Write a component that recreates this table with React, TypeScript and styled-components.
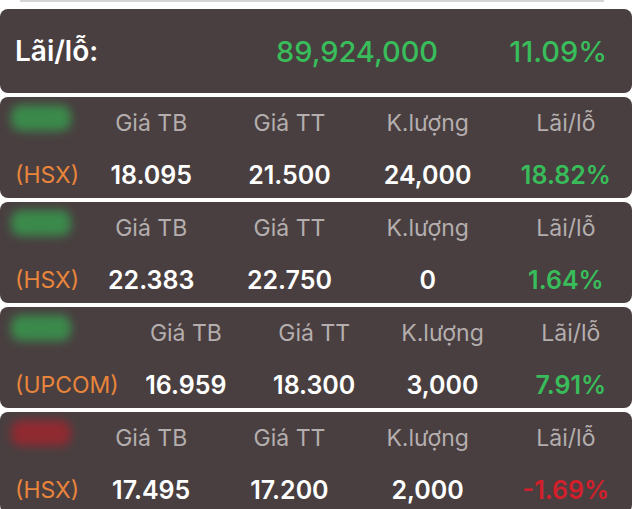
import React from 'react';
import styled, { createGlobalStyle } from 'styled-components';

const GlobalStyle = createGlobalStyle`
  html, body {
    margin: 0;
    padding: 0;
    background: #ffffff;
    font-family: 'Inter', 'Liberation Sans', Arial, sans-serif;
  }
`;

const GREEN = '#38bd5a';
const RED = '#d21f2b';

interface Holding {
  exchange: string;
  avg: string;
  price: string;
  qty: string;
  pnl: string;
  up: boolean;
}

const holdings: Holding[] = [
  { exchange: '(HSX)', avg: '18.095', price: '21.500', qty: '24,000', pnl: '18.82%', up: true },
  { exchange: '(HSX)', avg: '22.383', price: '22.750', qty: '0', pnl: '1.64%', up: true },
  { exchange: '(UPCOM)', avg: '16.959', price: '18.300', qty: '3,000', pnl: '7.91%', up: true },
  { exchange: '(HSX)', avg: '17.495', price: '17.200', qty: '2,000', pnl: '-1.69%', up: false },
];

const Page = styled.div`
  width: 632px;
  display: flex;
  flex-direction: column;
  gap: 4px;
`;

const TopRule = styled.div`
  height: 2px;
  margin: 0 28px 3px 20px;
  background: #d4d4d4;
`;

const Card = styled.div`
  background: #493f40;
  border-radius: 8px;
`;

const SummaryCard = styled(Card)`
  height: 84px;
  display: grid;
  grid-template-columns: 215px 254px 1fr;
  align-items: center;
  padding-left: 15px;
`;

const SummaryLabel = styled.div`
  color: #ffffff;
  font-size: 28px;
  font-weight: 600;
`;

const SummaryValue = styled.div<{ $align: 'center' | 'right' }>`
  color: ${GREEN};
  font-size: 29px;
  font-weight: 500;
  text-align: ${(p) => p.$align};
  padding-right: ${(p) => (p.$align === 'right' ? '25px' : '0')};
`;

const StockCard = styled(Card)`
  display: grid;
  grid-template-columns: auto repeat(4, 1fr);
  grid-template-rows: 38px 38px;
  column-gap: 6px;
  row-gap: 14px;
  padding: 7px 0 4px 15px;
  align-items: center;
`;

const Ticker = styled.div<{ $up: boolean }>`
  width: 60px;
  height: 26px;
  margin: -10px 0 0 -4px;
  border-radius: 10px;
  background: ${(p) => (p.$up ? '#3b8a4b' : '#902a31')};
  filter: blur(5px);
`;

const Label = styled.div`
  color: #b4aeae;
  font-size: 23px;
  text-align: center;
`;

const Exchange = styled.div`
  color: #e8843b;
  font-size: 23px;
`;

const Value = styled.div<{ $color?: string }>`
  color: ${(p) => p.$color || '#ffffff'};
  font-size: 25px;
  font-weight: 600;
  text-align: center;
`;

const App: React.FC = () => {
  return (
    <>
      <GlobalStyle />
      <Page>
        <TopRule />
        <SummaryCard>
          <SummaryLabel>Lãi/lỗ:</SummaryLabel>
          <SummaryValue $align="center">89,924,000</SummaryValue>
          <SummaryValue $align="right">11.09%</SummaryValue>
        </SummaryCard>
        {holdings.map((h, i) => (
          <StockCard key={i}>
            <Ticker $up={h.up} />
            <Label>Giá TB</Label>
            <Label>Giá TT</Label>
            <Label>K.lượng</Label>
            <Label>Lãi/lỗ</Label>
            <Exchange>{h.exchange}</Exchange>
            <Value>{h.avg}</Value>
            <Value>{h.price}</Value>
            <Value>{h.qty}</Value>
            <Value $color={h.up ? GREEN : RED}>{h.pnl}</Value>
          </StockCard>
        ))}
      </Page>
    </>
  );
};

export default App;
